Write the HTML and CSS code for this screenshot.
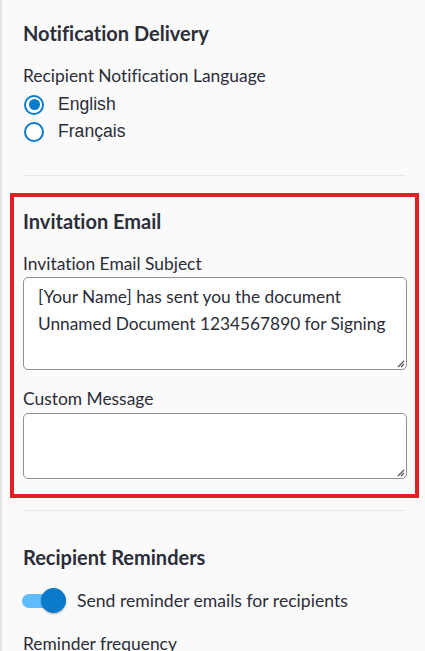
FILE: index.html
```html
<!DOCTYPE html>
<html>
<head>
<meta charset="utf-8">
<link rel="stylesheet" href="styles.css">
</head>
<body>
<div class="panel">
  <section class="section first">
    <h2 class="title">Notification Delivery</h2>
    <div class="label">Recipient Notification Language</div>
    <div class="radios">
      <label class="radio"><span class="dot checked"></span><span class="rtext">English</span></label>
      <label class="radio"><span class="dot"></span><span class="rtext">Français</span></label>
    </div>
  </section>
  <div class="rule"></div>
  <section class="section highlight">
    <h2 class="title">Invitation Email</h2>
    <div class="label">Invitation Email Subject</div>
    <div class="area tall">[Your Name] has sent you the document Unnamed Document 1234567890 for Signing<svg class="grip" width="9" height="9" viewBox="0 0 9 9"><path d="M8 2 L2 8 M8 5 L5 8" stroke="#555" stroke-width="1.2" fill="none"/></svg></div>
    <div class="label gap">Custom Message</div>
    <div class="area short"><svg class="grip" width="9" height="9" viewBox="0 0 9 9"><path d="M8 2 L2 8 M8 5 L5 8" stroke="#555" stroke-width="1.2" fill="none"/></svg></div>
  </section>
  <div class="rule second"></div>
  <section class="section third">
    <h2 class="title">Recipient Reminders</h2>
    <div class="toggle-row">
      <span class="toggle"><span class="knob"></span></span>
      <span class="ttext">Send reminder emails for recipients</span>
    </div>
    <div class="label freq">Reminder frequency</div>
  </section>
</div>
</body>
</html>
```
FILE: styles.css
```css
html, body {
  margin: 0;
  padding: 0;
}
body {
  background: #fafafa;
  font-family: Lato, "Open Sans", sans-serif;
  font-variant-ligatures: none;
  color: #2b2d38;
  width: 425px;
  height: 651px;
  overflow: hidden;
}
.panel {
  border-left: 2px solid #e3e7ec;
  min-height: 651px;
  box-sizing: border-box;
  display: flex;
  flex-direction: column;
}
.section {
  padding: 0 19px 0 21px;
  display: flex;
  flex-direction: column;
}
.first {
  padding-top: 21px;
  padding-bottom: 30px;
}
.title {
  margin: 0;
  font-size: 20px;
  line-height: 24px;
  font-weight: 700;
  color: #2b2d38;
}
.label {
  font-size: 17.4px;
  line-height: 20px;
  margin-top: 21px;
}
.radios {
  display: flex;
  flex-direction: column;
  margin-top: 5px;
}
.radio {
  display: flex;
  align-items: center;
  height: 27px;
  font-family: "Liberation Sans", Arial, sans-serif;
  font-size: 17.6px;
}
.dot {
  width: 16px;
  height: 16px;
  border: 2px solid #0a7acb;
  border-radius: 50%;
  box-sizing: content-box;
  margin-left: 1px;
  margin-right: 14px;
  position: relative;
  background: #fff;
}
.dot.checked::after {
  content: "";
  position: absolute;
  left: 2.5px;
  top: 2.5px;
  width: 11px;
  height: 11px;
  border-radius: 50%;
  background: #0a7acb;
}
.rule {
  height: 1px;
  background: #e5e7ea;
  margin: 0 19px 0 21px;
}
.highlight {
  margin: 17px 6px 0 8px;
  border: 4px solid #e41e25;
  padding: 12px 8px 15px 9px;
}
.highlight .label {
  margin-top: 21px;
}
.highlight .label.gap {
  margin-top: 19px;
}
.area {
  margin-top: 3px;
  background: #fff;
  border: 1px solid #8e9196;
  border-radius: 5px;
  box-sizing: border-box;
  position: relative;
  font-size: 17.3px;
  line-height: 27px;
  padding: 5px 14px;
}
.tall { height: 93px; }
.short { height: 66px; margin-top: 4px; }
.grip {
  position: absolute;
  right: 1px;
  bottom: 1px;
}
.second {
  margin-top: 12px;
}
.third {
  padding-top: 34px;
}
.toggle-row {
  display: flex;
  align-items: center;
  margin-top: 21px;
}
.toggle {
  width: 44px;
  height: 14px;
  background: #5fbcff;
  border-radius: 7px;
  position: relative;
  margin-right: 11px;
  margin-left: -1px;
}
.knob {
  position: absolute;
  right: 0;
  top: -5.5px;
  width: 25px;
  height: 25px;
  border-radius: 50%;
  background: #0a7acb;
  box-shadow: 0 1px 2px rgba(0,0,0,0.3);
}
.ttext {
  font-size: 17.6px;
}
.freq {
  margin-top: 23px;
  font-size: 17.4px;
}
```
